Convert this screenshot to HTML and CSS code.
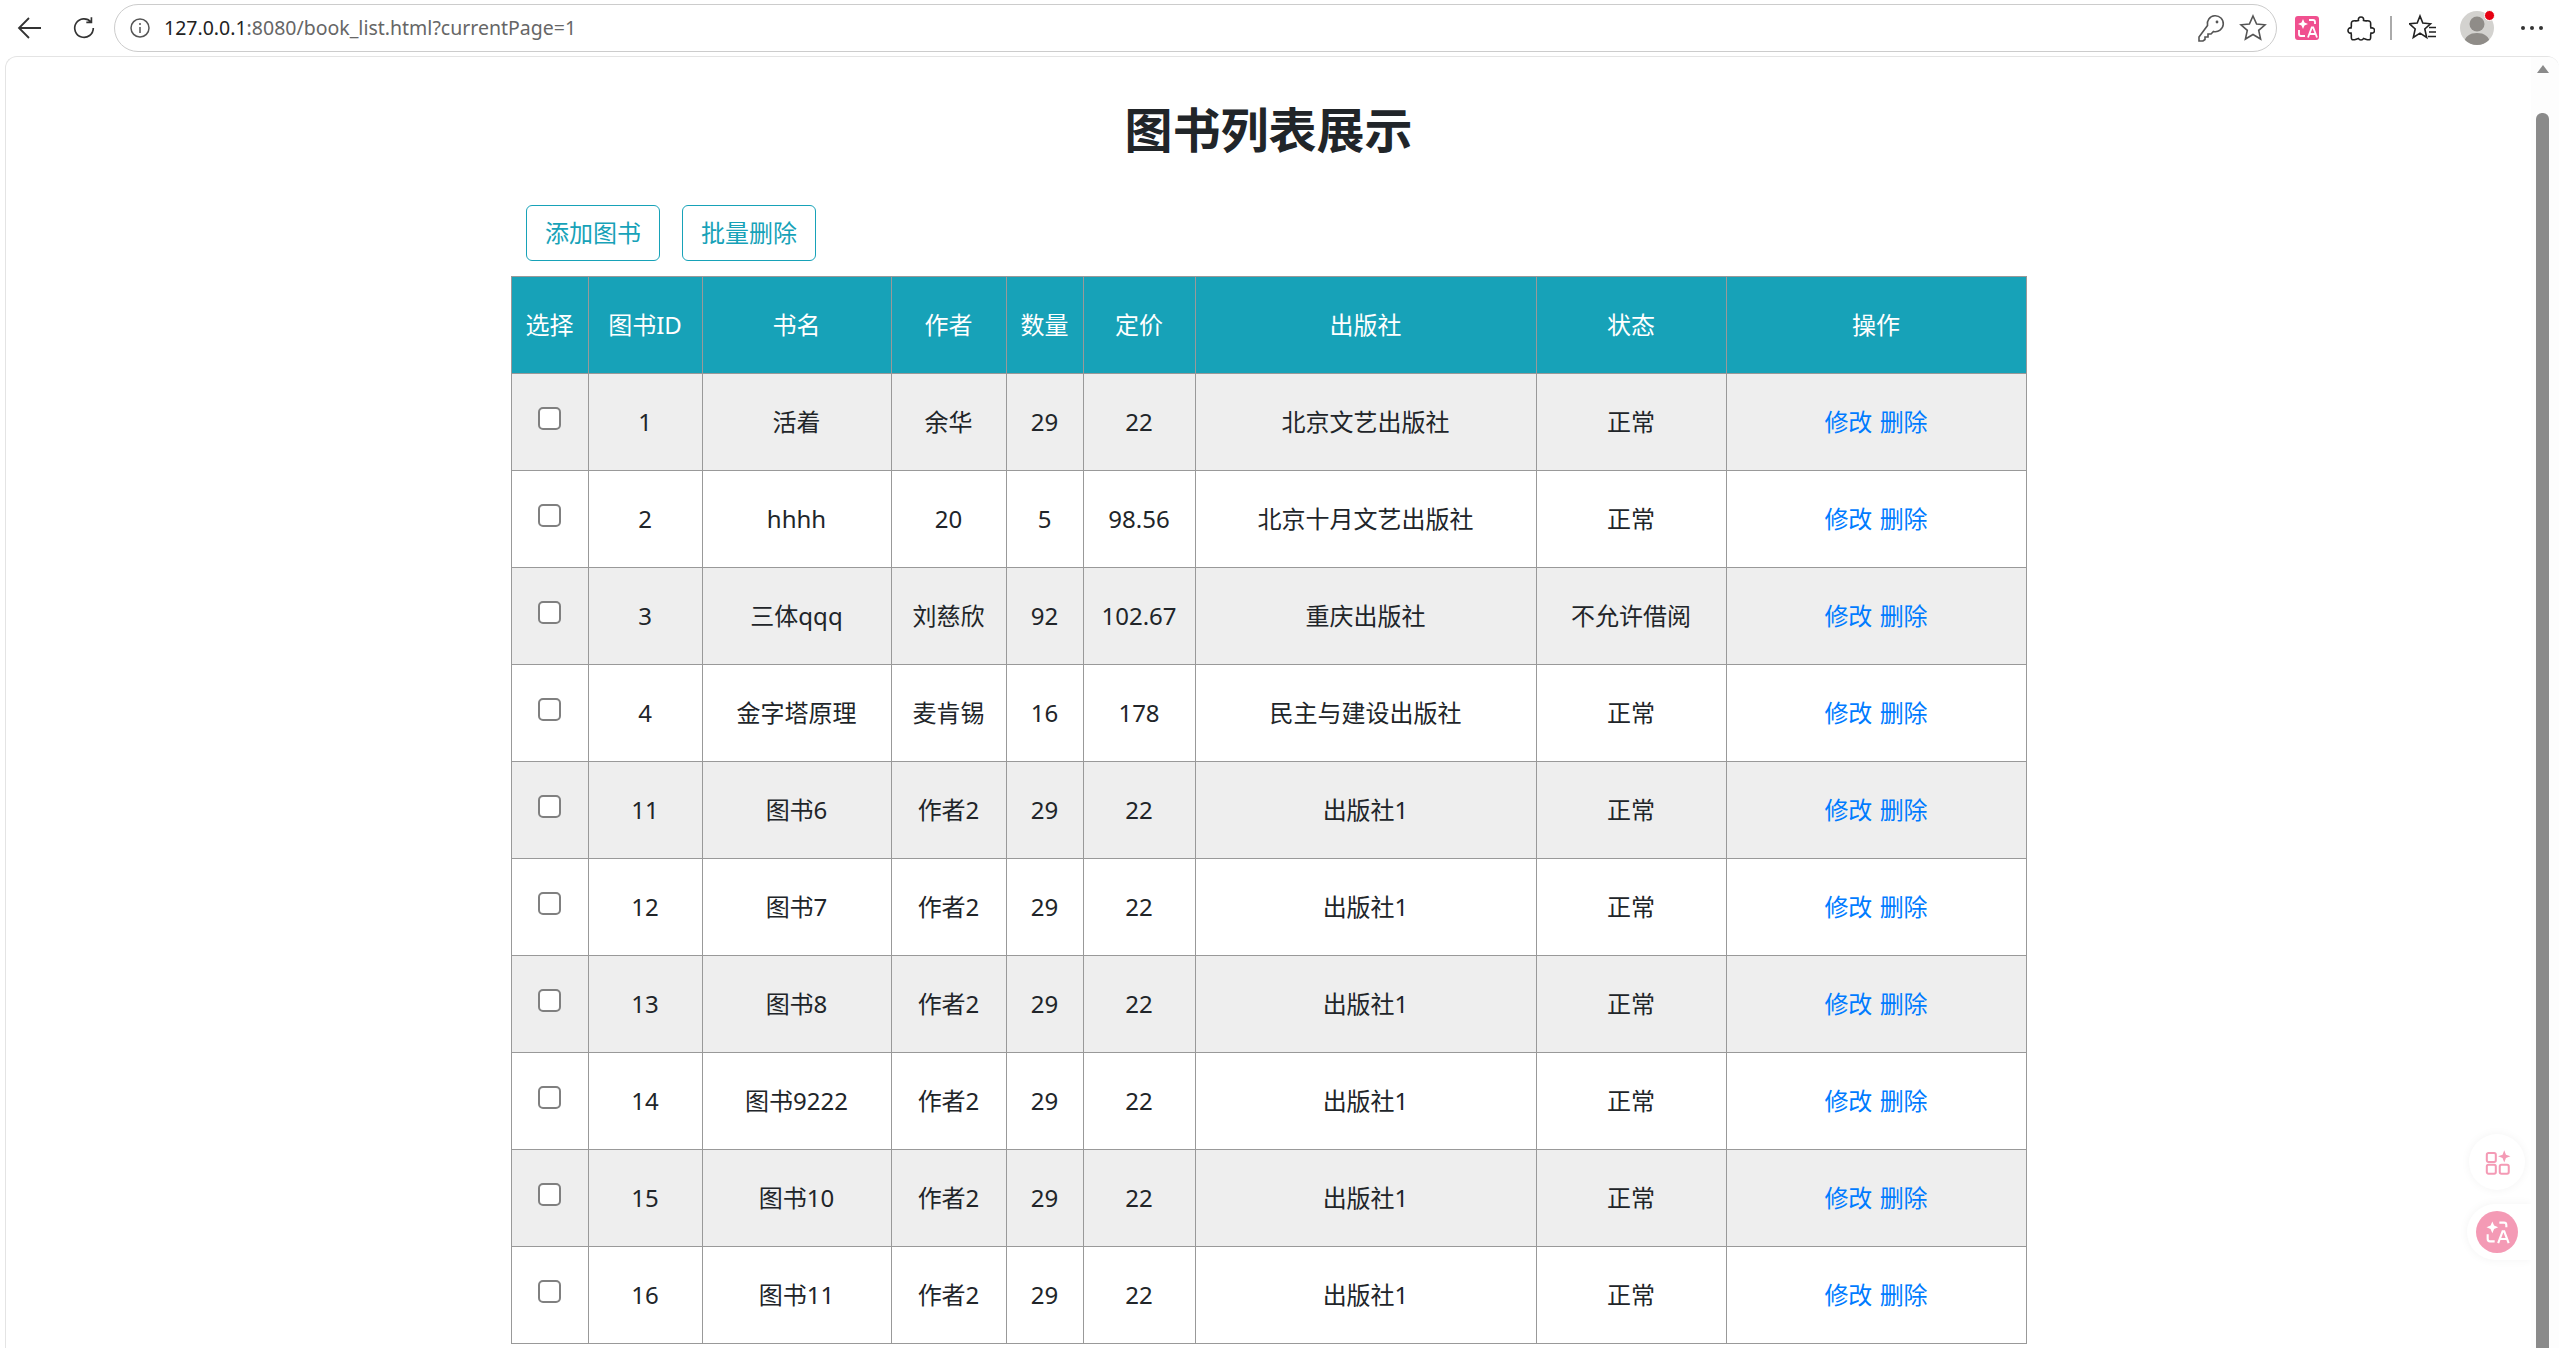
FILE: index.html
```html
<!DOCTYPE html>
<html lang="zh-CN">

<head>
  <meta charset="UTF-8" />
  <title>图书列表展示</title>
  <link rel="stylesheet" href="styles.css">
</head>

<body>
  <!-- Barra del navegador -->
  <header class="toolbar">
    <svg class="tool-icon back" viewBox="0 0 28 28"><path d="M25 14H3M13 4 3 14l10 10" /></svg>
    <svg class="tool-icon reload" viewBox="0 0 28 28"><path d="M21.5 7.5A10 10 0 1 0 24 14M22 2.5v5.5h-5.5" /></svg>
    <div class="address">
      <svg class="addr-info" viewBox="0 0 22 22"><circle cx="11" cy="11" r="9" /><path d="M11 10v6M11 6v2" /></svg>
      <span class="url"><span class="host">127.0.0.1</span>:8080/book_list.html?currentPage=1</span>
      <svg class="addr-icon key-icon" viewBox="0 0 28 28"><path d="M10.500 11.500a8 8 0 1 1 6 6L14 20h-3v3H8v2.500L6 27H2v-4z" /><circle cx="20" cy="8" r="1.400" class="dot" /></svg>
      <svg class="addr-icon star-icon" viewBox="0 0 28 28"><path d="m14 2 3.600 8 8.400.8-6.300 5.600 1.900 8.600-7.600-4.500L6.400 25l1.900-8.600L2 10.800l8.400-.8z" /></svg>
    </div>
    <div class="ext-translate">
      <svg viewBox="0 0 24 24"><path class="spark" d="m8 3 1.500 3.500L13 8 9.500 9.500 8 13l-1.500-3.500L3 8l3.500-1.500z" /><path class="line" d="M14 4h4a2 2 0 0 1 2 2v2M4 14v4a2 2 0 0 0 2 2h4M13 21.500l3.800-10h1.400l3.800 10M14.500 18h6" /></svg>
    </div>
    <svg class="tool-icon puzzle" viewBox="0 0 28 28"><path d="M14 3c2 0 3 1.500 2.500 3.500 2.500 1 5-.5 6.500 1s0 4 1 6.500c2-.5 3.500.5 3.500 2.500s-1.500 3-3.500 2.500c-1 2.500.5 5-1 6.500-2 1-4-.5-6.500-1-1 2-4 2-5 0-2.500.5-4.500 2-6.500 1-1.500-1.500 0-4-1-6.500-2 .5-3-1-3-2.500s1-3 3-2.500c1-2.500-.5-5 1-6.500s4 0 6.500-1C11 4.500 12 3 14 3z" /></svg>
    <span class="sep"></span>
    <svg class="tool-icon favs" viewBox="0 0 28 28"><path d="m11 2 2.800 7 7.700.8-5.700 5.200 1.900 8.500-6.700-4.300-6.700 4.300 1.900-8.500L.5 9.800l7.700-.8zM20 13.500h7M20 18h7M19 22.500h8" /></svg>
    <div class="avatar">
      <svg viewBox="0 0 34 34"><circle cx="17" cy="13" r="7.500" /><path d="M4 34c0-9 6-12 13-12s13 3 13 12z" /></svg>
      <span class="badge"></span>
    </div>
    <div class="more"><i></i><i></i><i></i></div>
  </header>

  <div class="window">
    <main class="page">
      <h1 class="title">图书列表展示</h1>

      <div class="actions">
        <button class="btn">添加图书</button>
        <button class="btn">批量删除</button>
      </div>

      <table class="books">
        <colgroup>
          <col class="c-check">
          <col class="c-id">
          <col class="c-name">
          <col class="c-author">
          <col class="c-num">
          <col class="c-price">
          <col class="c-press">
          <col class="c-status">
          <col class="c-ops">
        </colgroup>
        <thead>
          <tr>
            <th>选择</th>
            <th>图书ID</th>
            <th>书名</th>
            <th>作者</th>
            <th>数量</th>
            <th>定价</th>
            <th>出版社</th>
            <th>状态</th>
            <th>操作</th>
          </tr>
        </thead>
        <tbody>
          <tr>
            <td><input type="checkbox"></td>
            <td>1</td>
            <td>活着</td>
            <td>余华</td>
            <td>29</td>
            <td>22</td>
            <td>北京文艺出版社</td>
            <td>正常</td>
            <td><a href="#">修改</a> <a href="#">删除</a></td>
          </tr>
          <tr>
            <td><input type="checkbox"></td>
            <td>2</td>
            <td>hhhh</td>
            <td>20</td>
            <td>5</td>
            <td>98.56</td>
            <td>北京十月文艺出版社</td>
            <td>正常</td>
            <td><a href="#">修改</a> <a href="#">删除</a></td>
          </tr>
          <tr>
            <td><input type="checkbox"></td>
            <td>3</td>
            <td>三体qqq</td>
            <td>刘慈欣</td>
            <td>92</td>
            <td>102.67</td>
            <td>重庆出版社</td>
            <td>不允许借阅</td>
            <td><a href="#">修改</a> <a href="#">删除</a></td>
          </tr>
          <tr>
            <td><input type="checkbox"></td>
            <td>4</td>
            <td>金字塔原理</td>
            <td>麦肯锡</td>
            <td>16</td>
            <td>178</td>
            <td>民主与建设出版社</td>
            <td>正常</td>
            <td><a href="#">修改</a> <a href="#">删除</a></td>
          </tr>
          <tr>
            <td><input type="checkbox"></td>
            <td>11</td>
            <td>图书6</td>
            <td>作者2</td>
            <td>29</td>
            <td>22</td>
            <td>出版社1</td>
            <td>正常</td>
            <td><a href="#">修改</a> <a href="#">删除</a></td>
          </tr>
          <tr>
            <td><input type="checkbox"></td>
            <td>12</td>
            <td>图书7</td>
            <td>作者2</td>
            <td>29</td>
            <td>22</td>
            <td>出版社1</td>
            <td>正常</td>
            <td><a href="#">修改</a> <a href="#">删除</a></td>
          </tr>
          <tr>
            <td><input type="checkbox"></td>
            <td>13</td>
            <td>图书8</td>
            <td>作者2</td>
            <td>29</td>
            <td>22</td>
            <td>出版社1</td>
            <td>正常</td>
            <td><a href="#">修改</a> <a href="#">删除</a></td>
          </tr>
          <tr>
            <td><input type="checkbox"></td>
            <td>14</td>
            <td>图书9222</td>
            <td>作者2</td>
            <td>29</td>
            <td>22</td>
            <td>出版社1</td>
            <td>正常</td>
            <td><a href="#">修改</a> <a href="#">删除</a></td>
          </tr>
          <tr>
            <td><input type="checkbox"></td>
            <td>15</td>
            <td>图书10</td>
            <td>作者2</td>
            <td>29</td>
            <td>22</td>
            <td>出版社1</td>
            <td>正常</td>
            <td><a href="#">修改</a> <a href="#">删除</a></td>
          </tr>
          <tr>
            <td><input type="checkbox"></td>
            <td>16</td>
            <td>图书11</td>
            <td>作者2</td>
            <td>29</td>
            <td>22</td>
            <td>出版社1</td>
            <td>正常</td>
            <td><a href="#">修改</a> <a href="#">删除</a></td>
          </tr>
        </tbody>
      </table>

      <!-- Botones flotantes de la extension -->
      <div class="float-btn apps">
        <svg viewBox="0 0 24 24"><rect x="2.500" y="3.500" width="8" height="8" rx="1.500" /><rect x="2.500" y="14" width="8" height="8" rx="1.500" /><rect x="14" y="14" width="8" height="8" rx="1.500" /><path class="spark" d="m18 1 1.500 4 4 1.500-4 1.500-1.500 4-1.500-4-4-1.500 4-1.500z" /></svg>
      </div>
      <div class="float-btn translate">
        <span class="round">
          <svg viewBox="0 0 24 24"><path class="spark" d="m8 3 1.500 3.500L13 8 9.500 9.500 8 13l-1.500-3.500L3 8l3.500-1.500z" /><path class="line" d="M14 4h4a2 2 0 0 1 2 2v2M4 14v4a2 2 0 0 0 2 2h4M13 21.500l3.800-10h1.400l3.800 10M14.500 18h6" /></svg>
        </span>
      </div>
    </main>

    <div class="scrollbar">
      <span class="arrow"></span>
      <span class="thumb"></span>
    </div>
  </div>
</body>

</html>
```

FILE: styles.css
```css
:root {
  --teal: #17a2b8;
  --line: #999;
  --text: #212529;
  --pink: #f0508f;
}

html,
body {
  margin: 0;
  padding: 0;
  height: 100%;
  overflow: hidden;
  background: #fff;
}

body {
  display: flex;
  flex-direction: column;
  color: var(--text);
  font-family: "Noto Sans", "Noto Sans CJK SC", sans-serif;
  font-size: 24px;
  line-height: 36px;
}

/* Barra del navegador */
.toolbar {
  display: flex;
  align-items: center;
  flex: none;
  height: 56px;
  padding-left: 16px;
  box-sizing: border-box;
}

.tool-icon {
  flex: none;
  width: 28px;
  height: 28px;
  fill: none;
  stroke: #333;
  stroke-width: 1.8;
}

.reload {
  margin-left: 27px;
  width: 26px;
  height: 26px;
}

.address {
  display: flex;
  align-items: center;
  width: 2163px;
  height: 48px;
  margin-left: 17px;
  padding-left: 14px;
  box-sizing: border-box;
  border: 1.5px solid #ccc;
  border-radius: 24px;
}

.addr-info {
  width: 22px;
  height: 22px;
  fill: none;
  stroke: #555;
  stroke-width: 1.5;
}

.url {
  margin-left: 13px;
  flex: 1;
  color: #666;
  font-size: 19.5px;
  line-height: 28px;
}

.host {
  color: #222;
}

.addr-icon {
  width: 28px;
  height: 28px;
  fill: none;
  stroke: #555;
  stroke-width: 1.6;
}

.addr-icon .dot {
  fill: #555;
  stroke: none;
}

.star-icon {
  margin-left: 14px;
  margin-right: 9px;
}

.ext-translate {
  flex: none;
  width: 24px;
  height: 24px;
  margin-left: 18px;
  background: var(--pink);
  border-radius: 3px;
}

.ext-translate svg,
.round svg {
  display: block;
  width: 100%;
  height: 100%;
  fill: none;
  stroke: #fff;
  stroke-width: 1.8;
}

.spark {
  fill: #fff;
  stroke: none;
}

.puzzle {
  margin-left: 28px;
  stroke: #222;
  stroke-width: 1.6;
}

.sep {
  flex: none;
  width: 2px;
  height: 24px;
  margin-left: 15px;
  background: #aaa;
}

.favs {
  margin-left: 17px;
  stroke: #222;
  stroke-width: 1.6;
}

.avatar {
  position: relative;
  flex: none;
  width: 34px;
  height: 34px;
  margin-left: 23px;
  background: #d3d2cf;
  border-radius: 50%;
  overflow: visible;
}

.avatar svg {
  display: block;
  width: 34px;
  height: 34px;
  border-radius: 50%;
  fill: #8f8c88;
}

.badge {
  position: absolute;
  top: -1px;
  right: -1px;
  width: 9px;
  height: 9px;
  background: #e60012;
  border-radius: 50%;
  border: 1px solid #fff;
}

.more {
  display: flex;
  gap: 5px;
  margin-left: 27px;
}

.more i {
  width: 4px;
  height: 4px;
  background: #333;
  border-radius: 50%;
}

/* Ventana */
.window {
  display: flex;
  flex: 1;
  min-height: 0;
  margin-left: 5px;
  border-top: 1.5px solid #e4e4e4;
  border-left: 1.5px solid #e4e4e4;
  border-top-left-radius: 12px;
  border-top-right-radius: 12px;
  overflow: hidden;
}

.page {
  position: relative;
  flex: 1;
  min-width: 0;
  padding-top: 44px;
}

.title {
  margin: 0 0 46px;
  text-align: center;
  font-size: 48px;
  font-weight: 700;
  line-height: 58px;
}

.actions {
  display: flex;
  gap: 22px;
  width: 1515px;
  margin: 0 auto 15px;
  padding-left: 15px;
  box-sizing: border-box;
}

.btn {
  height: 56px;
  padding: 0 18px;
  background: #fff;
  border: 1.5px solid var(--teal);
  border-radius: 6px;
  color: var(--teal);
  font: inherit;
}

.books {
  width: 1515px;
  margin: 0 auto;
  table-layout: fixed;
  border-collapse: collapse;
  text-align: center;
}

.c-check { width: 77px; }
.c-id { width: 114px; }
.c-name { width: 189px; }
.c-author { width: 115px; }
.c-num { width: 77px; }
.c-price { width: 112px; }
.c-press { width: 341px; }
.c-status { width: 190px; }
.c-ops { width: 300px; }

.books th,
.books td {
  padding: 30px 0;
  border: 1px solid var(--line);
  font-weight: 400;
}

.books th {
  background: var(--teal);
  color: #fff;
}

.books tbody tr:nth-child(odd) {
  background: #eee;
}

.books a {
  color: #007bff;
  text-decoration: none;
}

.books a + a {
  margin-left: 1px;
}

.books input {
  appearance: none;
  display: inline-block;
  width: 23px;
  height: 23px;
  margin: -6px 0 6px;
  vertical-align: middle;
  background: #fff;
  border: 2px solid #808080;
  border-radius: 5px;
}

.float-btn {
  position: absolute;
  right: 6px;
  width: 56px;
  height: 56px;
  display: grid;
  place-items: center;
  background: #fff;
  border-radius: 50%;
  box-shadow: 0 0 10px rgba(0, 0, 0, 0.05);
}

.apps {
  top: 1077px;
}

.apps svg {
  width: 27px;
  height: 27px;
  fill: none;
  stroke: #f49ab5;
  stroke-width: 1.8;
}

.apps .spark {
  fill: #f49ab5;
}

.translate {
  top: 1147px;
  right: 0;
  width: 64px;
  border-radius: 28px 0 0 28px;
  justify-items: start;
  padding-left: 9px;
  box-sizing: border-box;
}

.round {
  width: 42px;
  height: 42px;
  padding: 7px;
  box-sizing: border-box;
  background: #f49ab5;
  border-radius: 50%;
}

/* Barra de desplazamiento */
.scrollbar {
  position: relative;
  flex: none;
  width: 28px;
  background: #fdfdfd;
}

.arrow {
  position: absolute;
  top: 8px;
  left: 6px;
  border-left: 6px solid transparent;
  border-right: 6px solid transparent;
  border-bottom: 8px solid #8a8a8a;
}

.thumb {
  position: absolute;
  top: 56px;
  bottom: 0;
  left: 5px;
  width: 13px;
  background: #8a8a8a;
  border-radius: 6px 6px 0 0;
}
```
